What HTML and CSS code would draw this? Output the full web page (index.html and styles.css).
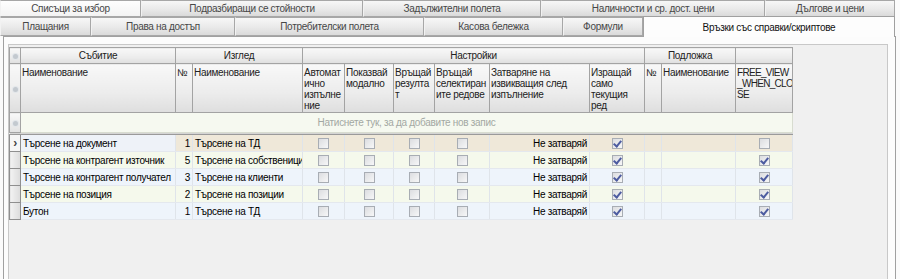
FILE: index.html
```html
<!DOCTYPE html>
<html lang="bg">
<head>
    <meta charset="UTF-8">
    <title>Връзки със справки/скриптове</title>
    <link rel="stylesheet" href="styles.css">
</head>
<body>

<div class="tabs">
    <div class="tab-row">
        <div class="tab tab-hot w141">Списъци за избор</div>
        <div class="tab w222">Подразбиращи се стойности</div>
        <div class="tab w178">Задължителни полета</div>
        <div class="tab w224">Наличности и ср. дост. цени</div>
        <div class="tab w130">Дългове и цени</div>
    </div>
    <div class="tab-row">
        <div class="tab w91">Плащания</div>
        <div class="tab w144">Права на достъп</div>
        <div class="tab w189">Потребителски полета</div>
        <div class="tab w139">Касова бележка</div>
        <div class="tab w80">Формули</div>
        <div class="tab tab-active w252">Връзки със справки/скриптове</div>
    </div>
</div>

<div class="page">
    <div class="grid-box">
        <table class="grid">
            <colgroup>
                <col class="c-ind"><col class="c-name"><col class="c-no"><col class="c-view">
                <col class="c-auto"><col class="c-modal"><col class="c-res"><col class="c-sel">
                <col class="c-close"><col class="c-cur"><col class="c-no"><col class="c-sub"><col class="c-free">
            </colgroup>
            <thead>
                <tr class="band">
                    <th class="ind"><span class="dot"></span></th>
                    <th>Събитие</th>
                    <th colspan="2">Изглед</th>
                    <th colspan="6">Настройки</th>
                    <th colspan="2">Подложка</th>
                    <th></th>
                </tr>
                <tr class="caps">
                    <th class="ind"><span class="dot"></span></th>
                    <th>Наименование</th>
                    <th>№</th>
                    <th>Наименование</th>
                    <th>Автомат<br>ично<br>изпълне<br>ние</th>
                    <th>Показвай<br>модално</th>
                    <th>Връщай<br>резулта<br>т</th>
                    <th>Връщай<br>селектиран<br>ите редове</th>
                    <th>Затваряне на<br>извикващия след<br>изпълнение</th>
                    <th>Изращай<br>само<br>текущия<br>ред</th>
                    <th>№</th>
                    <th>Наименование</th>
                    <th class="tight">FREE_VIEW<br>_WHEN_CLO<br>SE</th>
                </tr>
            </thead>
            <tbody>
                <tr class="new-row">
                    <td class="ind"><span class="dot"></span></td>
                    <td colspan="12">Натиснете тук, за да добавите нов запис</td>
                </tr>
                <tr class="split"><td colspan="13"></td></tr>
                <tr class="row current">
                    <td class="ind"><span class="arrow">&#8250;</span></td>
                    <td class="focus">Търсене на документ</td>
                    <td class="num">1</td>
                    <td>Търсене на ТД</td>
                    <td class="mid"><span class="cb"></span></td>
                    <td class="mid"><span class="cb"></span></td>
                    <td class="mid"><span class="cb"></span></td>
                    <td class="mid"><span class="cb"></span></td>
                    <td class="num">Не затваряй</td>
                    <td class="mid"><span class="cb on"></span></td>
                    <td></td>
                    <td></td>
                    <td class="mid"><span class="cb"></span></td>
                </tr>
                <tr class="row odd">
                    <td class="ind"></td>
                    <td>Търсене на контрагент източник</td>
                    <td class="num">5</td>
                    <td>Търсене на собственици</td>
                    <td class="mid"><span class="cb"></span></td>
                    <td class="mid"><span class="cb"></span></td>
                    <td class="mid"><span class="cb"></span></td>
                    <td class="mid"><span class="cb"></span></td>
                    <td class="num">Не затваряй</td>
                    <td class="mid"><span class="cb on"></span></td>
                    <td></td>
                    <td></td>
                    <td class="mid"><span class="cb on"></span></td>
                </tr>
                <tr class="row even">
                    <td class="ind"></td>
                    <td>Търсене на контрагент получател</td>
                    <td class="num">3</td>
                    <td>Търсене на клиенти</td>
                    <td class="mid"><span class="cb"></span></td>
                    <td class="mid"><span class="cb"></span></td>
                    <td class="mid"><span class="cb"></span></td>
                    <td class="mid"><span class="cb"></span></td>
                    <td class="num">Не затваряй</td>
                    <td class="mid"><span class="cb on"></span></td>
                    <td></td>
                    <td></td>
                    <td class="mid"><span class="cb on"></span></td>
                </tr>
                <tr class="row odd">
                    <td class="ind"></td>
                    <td>Търсене на позиция</td>
                    <td class="num">2</td>
                    <td>Търсене на позиции</td>
                    <td class="mid"><span class="cb"></span></td>
                    <td class="mid"><span class="cb"></span></td>
                    <td class="mid"><span class="cb"></span></td>
                    <td class="mid"><span class="cb"></span></td>
                    <td class="num">Не затваряй</td>
                    <td class="mid"><span class="cb on"></span></td>
                    <td></td>
                    <td></td>
                    <td class="mid"><span class="cb on"></span></td>
                </tr>
                <tr class="row even">
                    <td class="ind"></td>
                    <td>Бутон</td>
                    <td class="num">1</td>
                    <td>Търсене на ТД</td>
                    <td class="mid"><span class="cb"></span></td>
                    <td class="mid"><span class="cb"></span></td>
                    <td class="mid"><span class="cb"></span></td>
                    <td class="mid"><span class="cb"></span></td>
                    <td class="num">Не затваряй</td>
                    <td class="mid"><span class="cb on"></span></td>
                    <td></td>
                    <td></td>
                    <td class="mid"><span class="cb on"></span></td>
                </tr>
            </tbody>
        </table>
    </div>
</div>

</body>
</html>
```

FILE: styles.css
```css
body, html {
    margin: 0;
    padding: 0;
    height: 100%;
    overflow: hidden;
    background-color: #fbfbfb;
    font-family: "Liberation Sans", Arial, sans-serif;
    font-size: 10px;
    letter-spacing: -0.3px;
    color: #111;
}

/* tab strip */
.tabs {
    display: flex;
    flex-direction: column;
}
.tab-row {
    display: flex;
    height: 17px;
}
.tab-row + .tab-row {
    height: 19px;
}
.tab {
    box-sizing: border-box;
    flex: none;
    display: flex;
    align-items: center;
    justify-content: center;
    border: 1px solid #a7a7a7;
    border-left-color: #f2f2f2;
    background: linear-gradient(#f7f7f7, #e9e9e9 55%, #dadada);
    color: #474747;
    white-space: nowrap;
}
.tab-hot {
    background: linear-gradient(#fefefe, #f3f3f3);
}
.tab-active {
    position: relative;
    z-index: 2;
    margin-top: -1px;
    height: 21px;
    background: #fdfdfd;
    border-color: #a0a0a0;
    border-bottom: none;
    color: #111;
}
.w141 { width: 141px; }
.w222 { width: 222px; }
.w178 { width: 178px; }
.w224 { width: 224px; }
.w130 { width: 130px; }
.w91 { width: 91px; }
.w144 { width: 144px; }
.w189 { width: 189px; }
.w139 { width: 139px; }
.w80 { width: 80px; }
.w252 { width: 252px; }

/* tab page */
.page {
    box-sizing: border-box;
    margin: 0 4px 0 3px;
    height: 243px;
    border: 1px solid #a0a0a0;
    border-bottom: none;
    background-color: #fcfcfc;
    padding: 7px 7px 0 4px;
}
.grid-box {
    height: 100%;
    border: 1px solid #c8c8c8;
    border-bottom: none;
    background-color: #f0f0f0;
    padding: 2px 0 0 0;
}

/* grid */
.grid {
    border-collapse: collapse;
    table-layout: fixed;
    width: 783px;
}
.c-ind { width: 11px; }
.c-name { width: 155px; }
.c-no { width: 17px; }
.c-view { width: 110px; }
.c-auto { width: 42px; }
.c-modal { width: 49px; }
.c-res { width: 41px; }
.c-sel { width: 55px; }
.c-close { width: 100px; }
.c-cur { width: 55px; }
.c-sub { width: 74px; }
.c-free { width: 57px; }

.grid th {
    border: 1px solid #a3a3a3;
    background: linear-gradient(#f8f8f8, #ececec 60%, #dedede);
    font-weight: normal;
    color: #222;
    padding: 0 1px;
    overflow: hidden;
}
.band th {
    height: 15px;
    text-align: center;
}
.caps th {
    height: 45px;
    text-align: left;
    vertical-align: top;
    line-height: 11px;
    padding-top: 3px;
}
.caps th.tight {
    letter-spacing: -0.7px;
}
.grid th.ind,
.grid td.ind {
    padding: 0;
    text-align: center;
    vertical-align: middle;
}
.dot {
    display: inline-block;
    width: 5px;
    height: 5px;
    border-radius: 50%;
    background-color: #c3c9cf;
    box-shadow: 0 0 0 1px #e2e6ea;
}

.new-row td {
    height: 17px;
    background-color: #f6f9f0;
    border: 1px solid #d8dcd0;
    color: #a3a8a3;
    text-align: center;
}
.new-row td.ind {
    background: linear-gradient(#f8f8f8, #e2e2e2);
    border-color: #a3a3a3;
}
.split td {
    height: 1px;
    padding: 0;
    border-top: 1px solid #9a9a9a;
    border-bottom: 1px solid #9a9a9a;
    background-color: #d4d4d4;
}

.row td {
    height: 16px;
    padding: 0 2px;
    border-right: 1px solid #dfe4ea;
    border-bottom: 1px solid #e4e8ee;
    white-space: nowrap;
    overflow: hidden;
    color: #000;
}
.row td.ind {
    border: 1px solid #8f8f8f;
    border-top-color: #d8d8d8;
    background: linear-gradient(90deg, #f2f2f2, #dcdcdc);
}
.current td {
    background-color: #efe8d9;
}
.current td.focus {
    background-color: #eef2f8;
}
.current td.ind {
    background: #f6f6f6;
}
.odd td {
    background-color: #f5f9ec;
}
.even td {
    background-color: #eef4fb;
}
.num {
    text-align: right;
}
.mid {
    text-align: center;
}
.arrow {
    font-size: 12px;
    line-height: 10px;
    color: #444;
    font-weight: bold;
}

/* check boxes */
.cb {
    display: inline-block;
    box-sizing: border-box;
    width: 11px;
    height: 11px;
    vertical-align: middle;
    border: 1px solid #a8adb4;
    background: linear-gradient(135deg, #dcdde0, #f7f7f8);
    position: relative;
}
.cb.on::after {
    content: '';
    position: absolute;
    left: 2px;
    top: 0;
    width: 3px;
    height: 6px;
    border-right: 2px solid #4d5ca0;
    border-bottom: 2px solid #4d5ca0;
    transform: rotate(40deg);
}
```
